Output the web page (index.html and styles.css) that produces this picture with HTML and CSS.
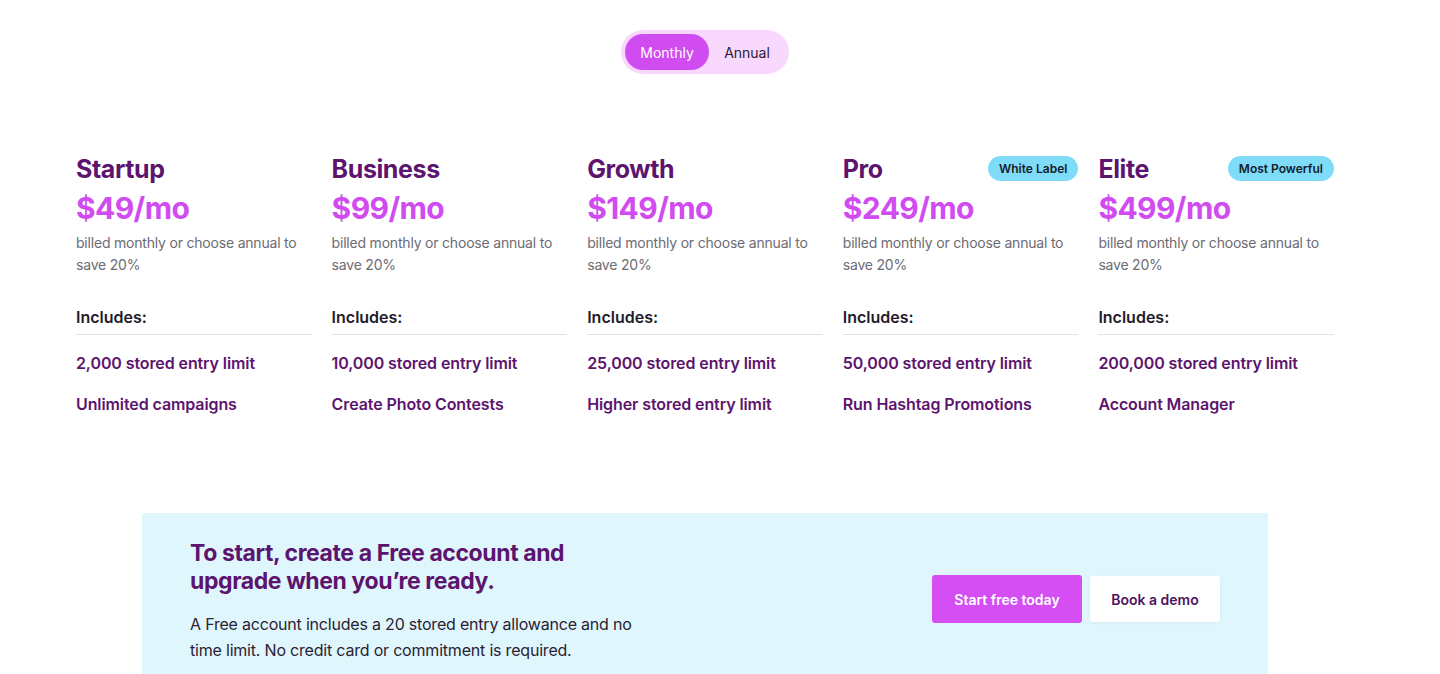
FILE: index.html
```html
<!DOCTYPE html>
<html lang="en">
<head>
<meta charset="utf-8">
<title>Pricing</title>
<link rel="stylesheet" href="styles.css">
</head>
<body>
<div class="page">
  <div class="toggle-row">
    <div class="toggle">
      <button class="toggle-btn active">Monthly</button>
      <button class="toggle-btn">Annual</button>
    </div>
  </div>

  <div class="plans">
    <div class="plan">
      <div class="plan-head"><h2 class="plan-name">Startup</h2></div>
      <div class="price">$49/mo</div>
      <p class="billed">billed monthly or choose annual to save 20%</p>
      <div class="includes">Includes:</div>
      <ul class="features">
        <li>2,000 stored entry limit</li>
        <li>Unlimited campaigns</li>
      </ul>
    </div>
    <div class="plan">
      <div class="plan-head"><h2 class="plan-name">Business</h2></div>
      <div class="price">$99/mo</div>
      <p class="billed">billed monthly or choose annual to save 20%</p>
      <div class="includes">Includes:</div>
      <ul class="features">
        <li>10,000 stored entry limit</li>
        <li>Create Photo Contests</li>
      </ul>
    </div>
    <div class="plan">
      <div class="plan-head"><h2 class="plan-name">Growth</h2></div>
      <div class="price">$149/mo</div>
      <p class="billed">billed monthly or choose annual to save 20%</p>
      <div class="includes">Includes:</div>
      <ul class="features">
        <li>25,000 stored entry limit</li>
        <li>Higher stored entry limit</li>
      </ul>
    </div>
    <div class="plan">
      <div class="plan-head"><h2 class="plan-name">Pro</h2><span class="badge">White Label</span></div>
      <div class="price">$249/mo</div>
      <p class="billed">billed monthly or choose annual to save 20%</p>
      <div class="includes">Includes:</div>
      <ul class="features">
        <li>50,000 stored entry limit</li>
        <li>Run Hashtag Promotions</li>
      </ul>
    </div>
    <div class="plan">
      <div class="plan-head"><h2 class="plan-name">Elite</h2><span class="badge">Most Powerful</span></div>
      <div class="price">$499/mo</div>
      <p class="billed">billed monthly or choose annual to save 20%</p>
      <div class="includes">Includes:</div>
      <ul class="features">
        <li>200,000 stored entry limit</li>
        <li>Account Manager</li>
      </ul>
    </div>
  </div>

  <div class="banner">
    <div class="banner-text">
      <h3 class="banner-title">To start, create a Free account and upgrade when you’re ready.</h3>
      <p class="banner-desc">A Free account includes a 20 stored entry allowance and no time limit. No credit card or commitment is required.</p>
    </div>
    <div class="banner-actions">
      <a class="btn btn-primary" href="#">Start free today</a>
      <a class="btn btn-secondary" href="#">Book a demo</a>
    </div>
  </div>
</div>
</body>
</html>
```

FILE: styles.css
```css
* { box-sizing: border-box; }
html, body { margin: 0; padding: 0; background: #ffffff; }
body {
  font-family: Inter, "Noto Sans", "Liberation Sans", sans-serif;
  color: #2a2233;
  overflow: hidden;
}
.page {
  width: 1410px;
  padding-top: 30px;
}
.toggle-row {
  display: flex;
  justify-content: center;
}
.toggle {
  display: flex;
  background: #f8d8fd;
  border-radius: 22px;
  padding: 4px;
  height: 44px;
  width: 168px;
}
.toggle-btn {
  border: 0;
  background: transparent;
  font-family: inherit;
  font-size: 14px;
  color: #2a1a33;
  border-radius: 18px;
  height: 36px;
  padding: 0;
  cursor: pointer;
}
.toggle-btn.active {
  background: #d14cf0;
  color: #ffffff;
  width: 84px;
}
.toggle-btn:not(.active) { flex: 1; }

.plans {
  display: grid;
  grid-template-columns: repeat(5, 235.6px);
  column-gap: 20px;
  width: 1258px;
  margin: 79px auto 0;
}
.plan-head {
  display: flex;
  justify-content: space-between;
  align-items: center;
  height: 32px;
}
.plan-name {
  margin: 0;
  font-size: 25px;
  font-weight: 700;
  color: #5c146e;
  letter-spacing: -0.4px;
}
.badge {
  background: #7fdcf9;
  color: #14202b;
  font-size: 12px;
  font-weight: 600;
  border-radius: 13px;
  height: 25px;
  line-height: 25px;
  padding: 0 11px;
  margin-top: -2px;
}
.price {
  margin-top: 3px;
  font-size: 30px;
  font-weight: 700;
  color: #d04cf0;
  letter-spacing: -0.6px;
  line-height: 40px;
}
.billed {
  margin: 4px 0 0;
  font-size: 14px;
  line-height: 22px;
  color: #6d6b73;
  font-weight: 400;
  letter-spacing: -0.2px;
}
.includes {
  margin-top: 31px;
  font-size: 16px;
  font-weight: 600;
  color: #231b2b;
  padding-bottom: 7px;
  border-bottom: 1px solid #e3e1e6;
  line-height: 20px;
}
.features {
  list-style: none;
  margin: 18px 0 0;
  padding: 0;
}
.features li {
  font-size: 16px;
  font-weight: 600;
  color: #5c146e;
  line-height: 20px;
  margin-bottom: 21px;
  letter-spacing: -0.1px;
}

.banner {
  width: 1126px;
  margin: 78px auto 0;
  background: #e0f6fd;
  border-radius: 3px 3px 0 0;
  padding: 26px 48px 40px;
  display: flex;
  justify-content: space-between;
  align-items: flex-start;
}
.banner-title {
  margin: 0;
  font-size: 23px;
  line-height: 28px;
  font-weight: 700;
  color: #5c146e;
  width: 420px;
  letter-spacing: -0.4px;
}
.banner-desc {
  margin: 16px 0 0;
  font-size: 16px;
  line-height: 26px;
  color: #2a2233;
  width: 450px;
  letter-spacing: -0.2px;
}
.banner-actions {
  display: flex;
  gap: 8px;
  align-items: center;
  margin-top: 36px;
}
.btn {
  display: inline-flex;
  align-items: center;
  justify-content: center;
  text-decoration: none;
  font-size: 14px;
  font-weight: 600;
  border-radius: 3px;
}
.btn-primary {
  background: #d44ef3;
  color: #ffffff;
  width: 150px;
  height: 48px;
}
.btn-secondary {
  background: #ffffff;
  color: #4e1460;
  width: 130px;
  height: 46px;
  box-shadow: 0 1px 4px rgba(0, 0, 0, 0.06);
}
```
